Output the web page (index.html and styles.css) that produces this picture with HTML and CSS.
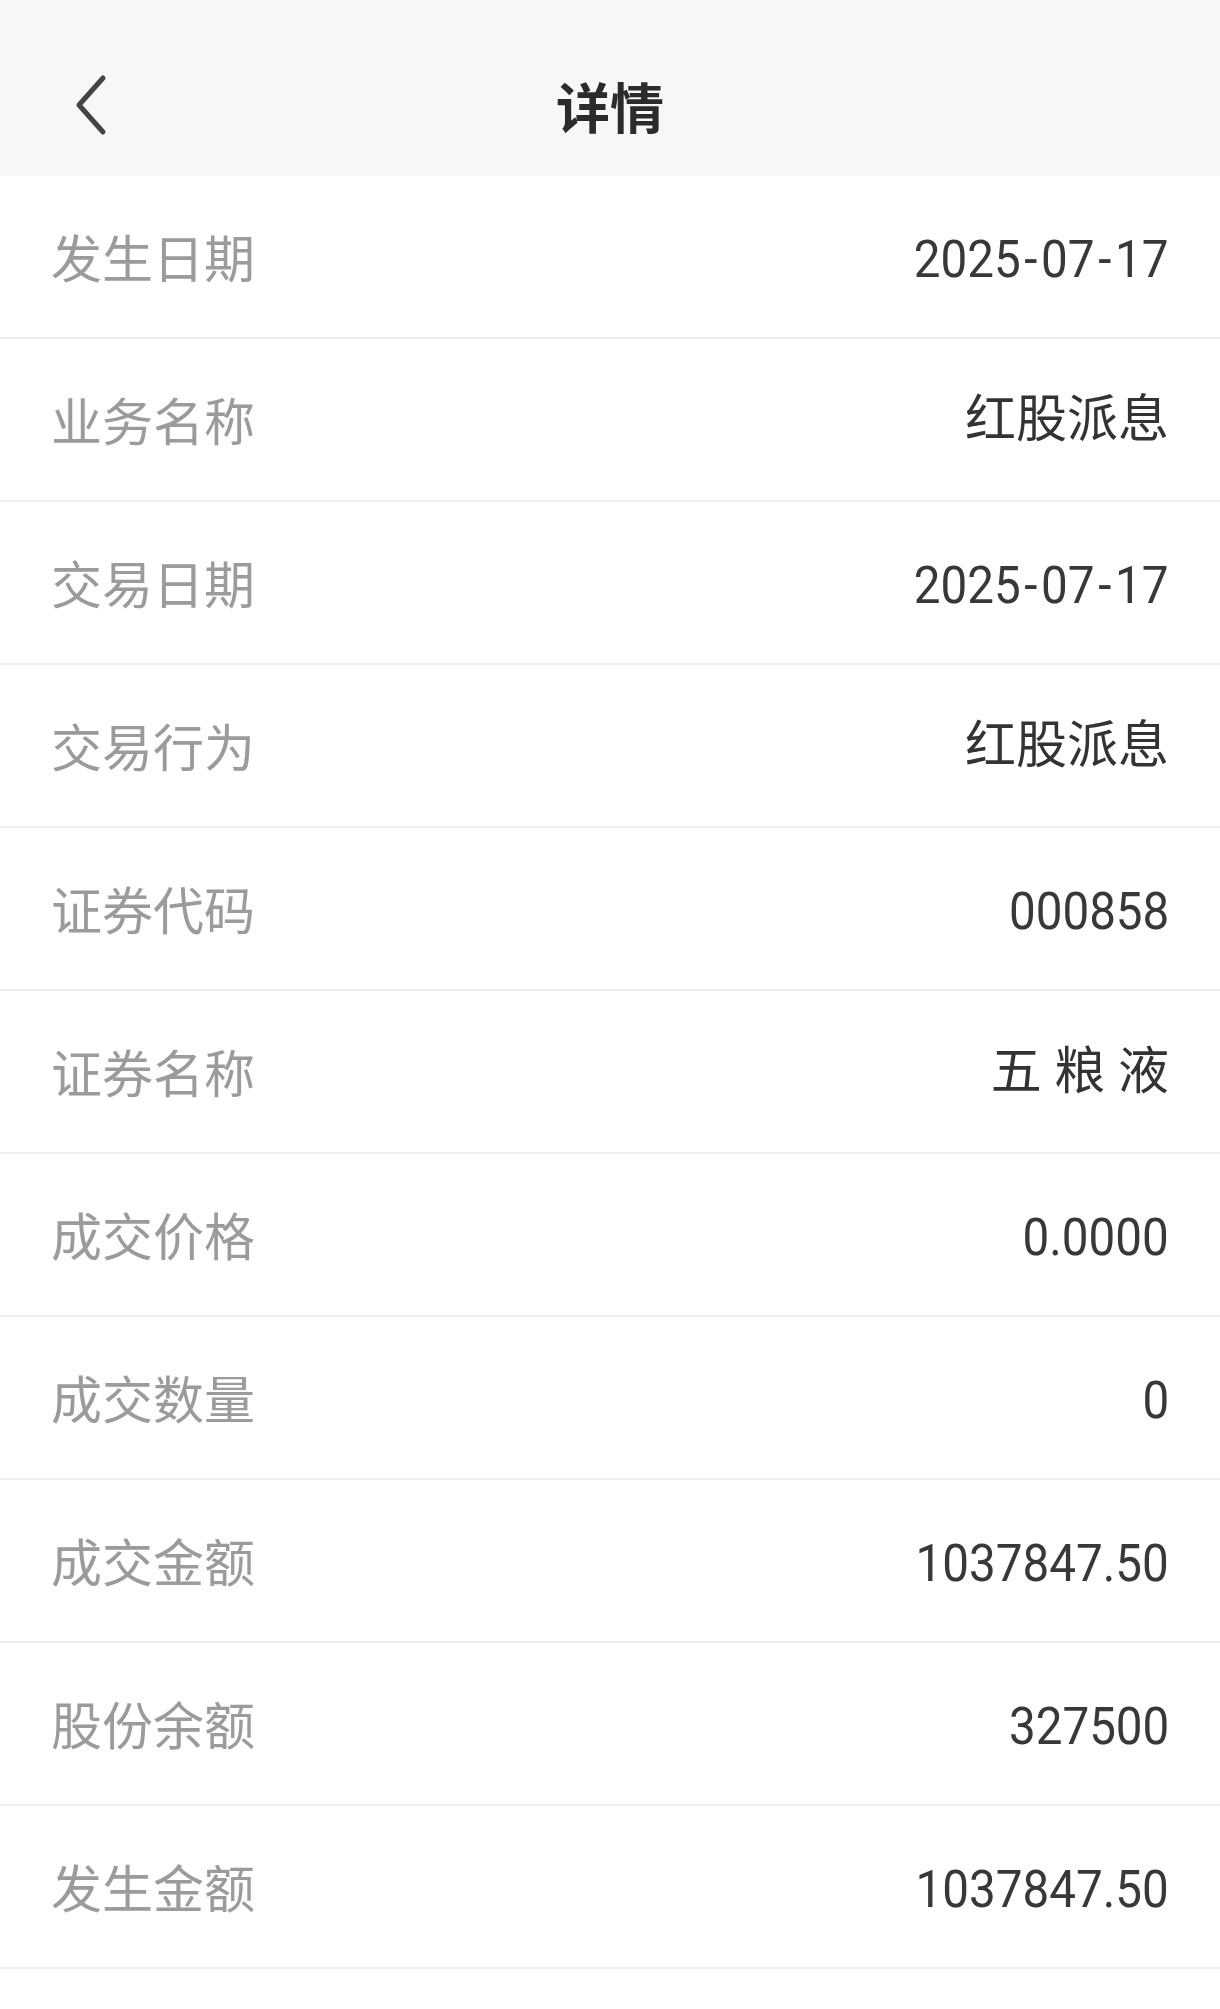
FILE: index.html
```html
<!DOCTYPE html>
<html lang="zh-CN">
<head>
<meta charset="utf-8">
<title>详情</title>
<link rel="stylesheet" href="styles.css">
</head>
<body>
<header class="nav">
  <button class="back" aria-label="返回">
    <svg width="40" height="62" viewBox="0 0 40 62"><path d="M33 4 L9 31 L33 58" fill="none" stroke="#444" stroke-width="5" stroke-linecap="round" stroke-linejoin="round"/></svg>
  </button>
  <h1 class="title">详情</h1>
</header>
<main class="list">
  <div class="row"><span class="label">发生日期</span><span class="value num">2025<span class="sep">-</span>07<span class="sep">-</span>17</span></div>
  <div class="row"><span class="label">业务名称</span><span class="value">红股派息</span></div>
  <div class="row"><span class="label">交易日期</span><span class="value num">2025<span class="sep">-</span>07<span class="sep">-</span>17</span></div>
  <div class="row"><span class="label">交易行为</span><span class="value">红股派息</span></div>
  <div class="row"><span class="label">证券代码</span><span class="value num">000858</span></div>
  <div class="row"><span class="label">证券名称</span><span class="value">五 粮 液</span></div>
  <div class="row"><span class="label">成交价格</span><span class="value num">0.0000</span></div>
  <div class="row"><span class="label">成交数量</span><span class="value num">0</span></div>
  <div class="row"><span class="label">成交金额</span><span class="value num">1037847.50</span></div>
  <div class="row"><span class="label">股份余额</span><span class="value num">327500</span></div>
  <div class="row"><span class="label">发生金额</span><span class="value num">1037847.50</span></div>
</main>
</body>
</html>
```
FILE: styles.css
```css
html, body {
  margin: 0;
  padding: 0;
  background: #ffffff;
}
body {
  font-family: Roboto, "Noto Sans CJK SC", sans-serif;
  width: 1220px;
}
.nav {
  height: 176px;
  box-sizing: border-box;
  padding-top: 36px;
  background: #f7f7f7;
  display: flex;
  align-items: center;
  justify-content: center;
  position: relative;
}
.back {
  position: absolute;
  left: 70px;
  top: 74px;
  border: 0;
  background: none;
  padding: 0;
  width: 40px;
  height: 62px;
}
.back svg { display: block; }
.title {
  margin: 0;
  font-family: "Noto Sans CJK SC", sans-serif;
  font-weight: 700;
  font-size: 54px;
  color: #2b2b2b;
  line-height: 1;
}
.list {
  display: flex;
  flex-direction: column;
}
.row {
  height: 161px;
  border-bottom: 2px solid #efefef;
  display: flex;
  align-items: center;
  justify-content: space-between;
  padding: 0 51px 0 51px;
}
.label {
  font-family: "Noto Sans CJK SC", sans-serif;
  font-size: 51px;
  color: #9b9b9b;
  line-height: 1;
}
.value {
  font-family: Roboto, "Noto Sans CJK SC", sans-serif;
  font-size: 51px;
  color: #333333;
  line-height: 1;
}
.num {
  display: inline-block;
  font-size: 52px;
  font-weight: 400;
  color: #383838;
  transform: scaleX(0.915);
  transform-origin: right center;
  padding-top: 6px;
}
.sep {
  margin: 0 4px;
}
```
